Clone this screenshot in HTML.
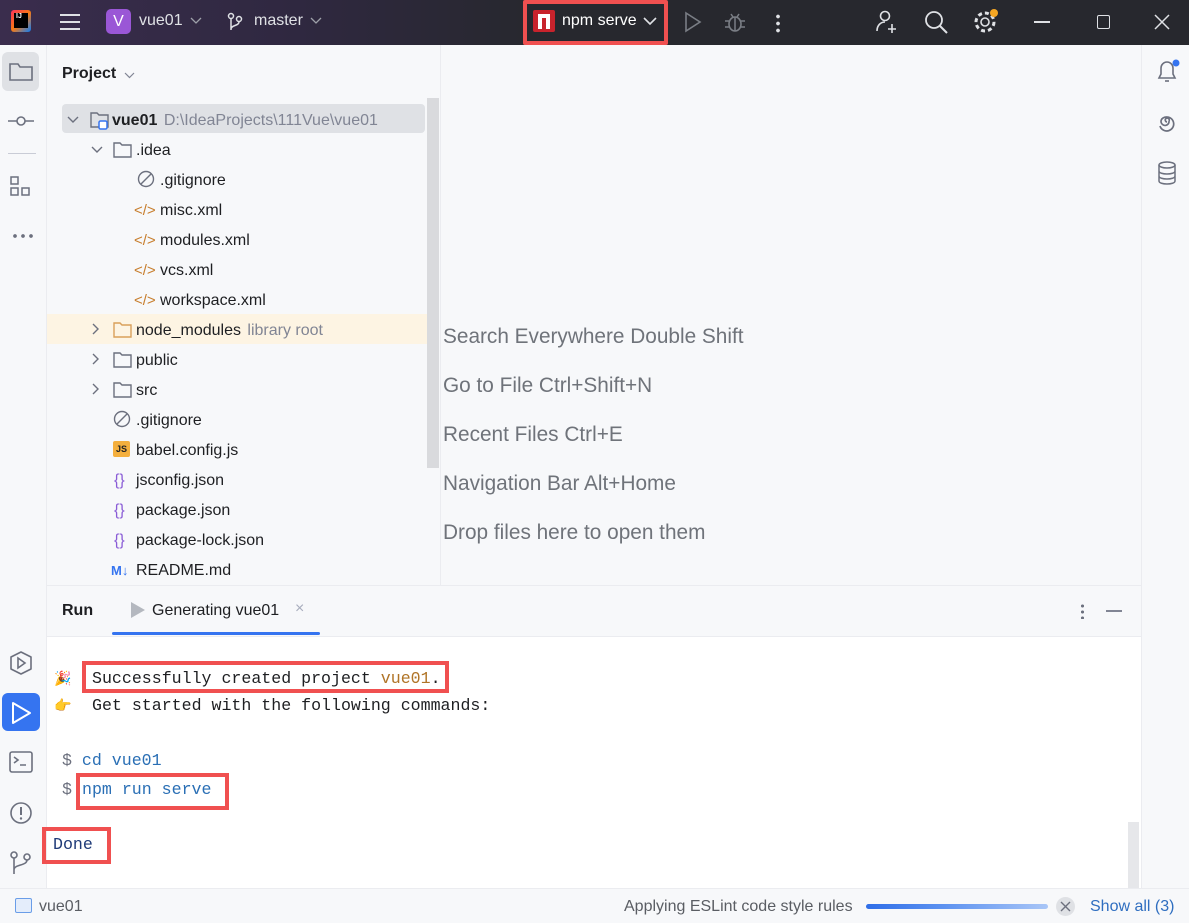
<!DOCTYPE html>
<html><head><meta charset="utf-8"><style>
*{box-sizing:border-box;margin:0;padding:0}
body{width:1189px;height:923px;overflow:hidden;background:#f7f8fa;font-family:"Liberation Sans","Noto Sans CJK SC",sans-serif;font-size:16px;color:#1e1f22;position:relative}
.abs{position:absolute}
.top{left:0;top:0;width:1189px;height:45px;background:linear-gradient(90deg,#3a2d4d 0%,#2f2840 25%,#27282e 45%,#27282e 100%);color:#dfe1e5}
.row{position:absolute;height:30px;line-height:34px;white-space:nowrap}
.mono{font-family:"Liberation Mono",monospace;font-size:16.6px}
svg{position:absolute}
.x{color:#c77d2c;font-size:15px}
</style></head><body>
<div class="abs top">
  <div class="abs" style="left:11px;top:10px;width:20px;height:22px;background:linear-gradient(135deg,#fe315d,#f97a12 50%,#087cfa);border-radius:3px"></div>
  <div class="abs" style="left:14px;top:13px;width:14px;height:15px;background:#000;color:#fff;font-size:7px;font-weight:bold;padding-left:2px">IJ</div>
  <svg style="left:59px;top:12px" width="22" height="20"><path d="M1 3h20M1 10h20M1 17h20" stroke="#dfe1e5" stroke-width="2"/></svg>
  <div class="abs" style="left:106px;top:9px;width:25px;height:25px;background:#9a57d6;border-radius:5px;color:#fff;text-align:center;line-height:25px;font-size:16px">V</div>
  <div class="abs" style="left:139px;top:12px">vue01</div>
  <svg style="left:190px;top:17px" width="12" height="8"><path d="M1 1l5 5 5-5" fill="none" stroke="#9da0a8" stroke-width="1.3"/></svg>
  <svg style="left:226px;top:12px" width="18" height="20"><circle cx="5" cy="4" r="2.5" fill="none" stroke="#dfe1e5" stroke-width="1.5"/><circle cx="13" cy="7" r="2.5" fill="none" stroke="#dfe1e5" stroke-width="1.5"/><path d="M5 7v11M13 10c0 4-8 3-8 7" fill="none" stroke="#dfe1e5" stroke-width="1.5"/></svg>
  <div class="abs" style="left:254px;top:12px">master</div>
  <svg style="left:310px;top:17px" width="12" height="8"><path d="M1 1l5 5 5-5" fill="none" stroke="#9da0a8" stroke-width="1.3"/></svg>
  <div class="abs" style="left:523px;top:0;width:145px;height:45px;border:4px solid #f05050;border-radius:2px"></div>
  <div class="abs" style="left:533px;top:10px;width:22px;height:22px;background:#c8232c;border-radius:2px"><div class="abs" style="left:5px;top:4px;width:12px;height:15px;border:4px solid #fff;border-bottom:none"></div></div>
  <div class="abs" style="left:562px;top:12px;color:#fff">npm serve</div>
  <svg style="left:643px;top:16px" width="14" height="10"><path d="M1 2l6 6 6-6" fill="none" stroke="#dfe1e5" stroke-width="1.6"/></svg>
  <svg style="left:684px;top:11px" width="18" height="22"><path d="M2 2l14 9-14 9z" fill="none" stroke="#7a7e85" stroke-width="1.6"/></svg>
  <svg style="left:723px;top:10px" width="24" height="24"><ellipse cx="12" cy="14" rx="6" ry="7" fill="none" stroke="#7a7e85" stroke-width="1.6"/><path d="M2 11h4M18 11h4M2 17h4M18 17h4M12 7v14M8 4l2 3M16 4l-2 3" stroke="#7a7e85" stroke-width="1.5"/></svg>
  <div class="abs" style="left:776px;top:13px;width:4px;height:20px;background:radial-gradient(circle,#dfe1e5 1.7px,transparent 2px) 0 0/4px 7px"></div>
  <svg style="left:874px;top:9px" width="26" height="26"><circle cx="11" cy="7" r="4.5" fill="none" stroke="#dfe1e5" stroke-width="1.6"/><path d="M3 22c0-6 4-9 8-9M18 15v9M14 20h8" fill="none" stroke="#dfe1e5" stroke-width="1.6"/></svg>
  <svg style="left:924px;top:10px" width="26" height="26"><circle cx="10" cy="10" r="8" fill="none" stroke="#dfe1e5" stroke-width="1.8"/><path d="M16 16l7 7" stroke="#dfe1e5" stroke-width="2"/></svg>
  <svg style="left:973px;top:9px" width="28" height="28"><circle cx="12" cy="13" r="4" fill="none" stroke="#dfe1e5" stroke-width="1.6"/><circle cx="12" cy="13" r="9" fill="none" stroke="#dfe1e5" stroke-width="3" stroke-dasharray="4 3"/><circle cx="21" cy="4" r="4" fill="#f5a623"/></svg>
  <div class="abs" style="left:1034px;top:21px;width:16px;height:1.5px;background:#dfe1e5"></div>
  <div class="abs" style="left:1097px;top:15px;width:13px;height:14px;border:1.5px solid #dfe1e5;border-radius:2px"></div>
  <svg style="left:1154px;top:14px" width="16" height="16"><path d="M1 1l14 14M15 1L1 15" stroke="#dfe1e5" stroke-width="1.5"/></svg>
</div>

<!-- left strip -->
<div class="abs" style="left:2px;top:52px;width:37px;height:39px;background:#dfe1e5;border-radius:6px"></div>
<svg style="left:9px;top:61px" width="24" height="20"><path d="M1 3h8l2 3h12v13H1z" fill="none" stroke="#6c707e" stroke-width="1.6"/></svg>
<svg style="left:8px;top:114px" width="26" height="14"><circle cx="13" cy="7" r="4" fill="none" stroke="#6c707e" stroke-width="1.6"/><path d="M0 7h9M17 7h9" stroke="#6c707e" stroke-width="1.6"/></svg>
<div class="abs" style="left:8px;top:153px;width:28px;height:1px;background:#c9ccd6"></div>
<svg style="left:10px;top:176px" width="22" height="22"><rect x="1" y="1" width="7" height="7" fill="none" stroke="#6c707e" stroke-width="1.5"/><rect x="1" y="12" width="7" height="7" fill="none" stroke="#6c707e" stroke-width="1.5"/><rect x="12" y="12" width="7" height="7" fill="none" stroke="#6c707e" stroke-width="1.5"/></svg>
<div class="abs" style="left:11px;top:234px;width:22px;height:4px;background:radial-gradient(circle,#6c707e 1.7px,transparent 2px) 0 0/8px 4px"></div>
<svg style="left:8px;top:650px" width="26" height="26"><path d="M13 2l10 5v12l-10 5-10-5V7z" fill="none" stroke="#6c707e" stroke-width="1.6" stroke-linejoin="round"/><path d="M10 8l7 5-7 5z" fill="none" stroke="#6c707e" stroke-width="1.6"/></svg>
<div class="abs" style="left:2px;top:693px;width:38px;height:38px;background:#3574f0;border-radius:6px"></div>
<svg style="left:11px;top:701px" width="22" height="24"><path d="M2 2l17 10-17 10z" fill="none" stroke="#fff" stroke-width="2" stroke-linejoin="round"/></svg>
<svg style="left:9px;top:751px" width="24" height="22"><rect x="1" y="1" width="22" height="20" rx="2" fill="none" stroke="#6c707e" stroke-width="1.6"/><path d="M5 6l4 3-4 3M11 14h6" fill="none" stroke="#6c707e" stroke-width="1.6"/></svg>
<svg style="left:9px;top:801px" width="24" height="24"><circle cx="12" cy="12" r="10" fill="none" stroke="#6c707e" stroke-width="1.6"/><path d="M12 6v8" stroke="#6c707e" stroke-width="2"/><circle cx="12" cy="17.5" r="1.2" fill="#6c707e"/></svg>
<svg style="left:9px;top:850px" width="24" height="26"><circle cx="5" cy="5" r="3" fill="none" stroke="#6c707e" stroke-width="1.6"/><circle cx="18" cy="7" r="3" fill="none" stroke="#6c707e" stroke-width="1.6"/><path d="M5 8v16M18 10c0 6-13 4-13 10" fill="none" stroke="#6c707e" stroke-width="1.6"/></svg>

<!-- right strip -->
<div class="abs" style="left:1141px;top:45px;width:1px;height:843px;background:#ebecf0"></div>
<svg style="left:1155px;top:58px" width="26" height="28"><path d="M4 20h16l-2-4V10a6 6 0 0 0-12 0v6z" fill="none" stroke="#6c707e" stroke-width="1.6"/><path d="M10 23h4" stroke="#6c707e" stroke-width="1.6"/><circle cx="21" cy="5" r="3.5" fill="#3574f0"/></svg>
<svg style="left:1156px;top:111px" width="22" height="22"><path d="M11 11a2 2 0 1 1 2-1M13 10a4 4 0 1 1-6-3M7 7a7 7 0 1 1-3 8" fill="none" stroke="#6c707e" stroke-width="1.7"/></svg>
<svg style="left:1157px;top:161px" width="20" height="24"><ellipse cx="10" cy="4" rx="8" ry="3" fill="none" stroke="#6c707e" stroke-width="1.5"/><path d="M2 4v16c0 4 16 4 16 0V4M2 10c0 4 16 4 16 0M2 15c0 4 16 4 16 0" fill="none" stroke="#6c707e" stroke-width="1.5"/></svg>

<!-- project panel -->
<div class="abs" style="left:46px;top:45px;width:1px;height:843px;background:#ebecf0"></div>
<div class="abs" style="left:440px;top:45px;width:1px;height:540px;background:#ebecf0"></div>
<div class="abs" style="left:62px;top:65px;font-weight:bold">Project</div>
<svg style="left:124px;top:72px" width="11" height="7"><path d="M1 1l4.5 4.5L10 1" fill="none" stroke="#818594" stroke-width="1.2"/></svg>
<div class="abs" style="left:62px;top:104px;width:363px;height:29px;background:#dfe1e5;border-radius:4px"></div>
<div class="abs" style="left:47px;top:314px;width:380px;height:30px;background:#fdf4e3"></div>
<div class="abs" style="left:427px;top:98px;width:12px;height:370px;background:#d9dadd"></div>

<svg style="left:67px;top:116px" width="12" height="8"><path d="M1 1l5 5 5-5" fill="none" stroke="#6c707e" stroke-width="1.4"/></svg>
<svg style="left:90px;top:111px" width="22" height="20"><path d="M1 2h6l2 2h9v12H1z" fill="none" stroke="#6c707e" stroke-width="1.4"/><rect x="9" y="10" width="8" height="8" rx="1.5" fill="#fff" stroke="#3574f0" stroke-width="1.5"/></svg>
<div class="row" style="left:112px;top:104px"><b>vue01</b> <span style="color:#818594;margin-left:2px">D:\IdeaProjects\111Vue\vue01</span></div>

<svg style="left:91px;top:146px" width="12" height="8"><path d="M1 1l5 5 5-5" fill="none" stroke="#6c707e" stroke-width="1.4"/></svg>
<svg style="left:113px;top:142px" width="19" height="16"><path d="M1 1h6l2 2h9v12H1z" fill="none" stroke="#6c707e" stroke-width="1.4"/></svg>
<div class="row" style="left:136px;top:134px">.idea</div>

<svg style="left:137px;top:170px" width="18" height="18"><circle cx="9" cy="9" r="7.5" fill="none" stroke="#6c707e" stroke-width="1.4"/><path d="M4 14L14 4" stroke="#6c707e" stroke-width="1.4"/></svg>
<div class="row" style="left:160px;top:164px">.gitignore</div>
<div class="row x" style="left:134px;top:194px">&lt;/&gt;</div><div class="row" style="left:160px;top:194px">misc.xml</div>
<div class="row x" style="left:134px;top:224px">&lt;/&gt;</div><div class="row" style="left:160px;top:224px">modules.xml</div>
<div class="row x" style="left:134px;top:254px">&lt;/&gt;</div><div class="row" style="left:160px;top:254px">vcs.xml</div>
<div class="row x" style="left:134px;top:284px">&lt;/&gt;</div><div class="row" style="left:160px;top:284px">workspace.xml</div>

<svg style="left:92px;top:323px" width="8" height="12"><path d="M1 1l5 5-5 5" fill="none" stroke="#6c707e" stroke-width="1.4"/></svg>
<svg style="left:113px;top:322px" width="19" height="16"><path d="M1 1h6l2 2h9v12H1z" fill="none" stroke="#d9a05b" stroke-width="1.4"/></svg>
<div class="row" style="left:136px;top:314px">node_modules <span style="color:#818594;margin-left:2px">library root</span></div>
<svg style="left:92px;top:353px" width="8" height="12"><path d="M1 1l5 5-5 5" fill="none" stroke="#6c707e" stroke-width="1.4"/></svg>
<svg style="left:113px;top:352px" width="19" height="16"><path d="M1 1h6l2 2h9v12H1z" fill="none" stroke="#6c707e" stroke-width="1.4"/></svg>
<div class="row" style="left:136px;top:344px">public</div>
<svg style="left:92px;top:383px" width="8" height="12"><path d="M1 1l5 5-5 5" fill="none" stroke="#6c707e" stroke-width="1.4"/></svg>
<svg style="left:113px;top:382px" width="19" height="16"><path d="M1 1h6l2 2h9v12H1z" fill="none" stroke="#6c707e" stroke-width="1.4"/></svg>
<div class="row" style="left:136px;top:374px">src</div>
<svg style="left:113px;top:410px" width="18" height="18"><circle cx="9" cy="9" r="7.5" fill="none" stroke="#6c707e" stroke-width="1.4"/><path d="M4 14L14 4" stroke="#6c707e" stroke-width="1.4"/></svg>
<div class="row" style="left:136px;top:404px">.gitignore</div>
<div class="abs" style="left:113px;top:441px;width:17px;height:16px;background:#f4af3d;border-radius:2px;font-size:9px;font-weight:bold;color:#222;text-align:center;line-height:17px">JS</div>
<div class="row" style="left:136px;top:434px">babel.config.js</div>
<div class="row" style="left:114px;top:464px;color:#8a5cd6">{}</div><div class="row" style="left:136px;top:464px">jsconfig.json</div>
<div class="row" style="left:114px;top:494px;color:#8a5cd6">{}</div><div class="row" style="left:136px;top:494px">package.json</div>
<div class="row" style="left:114px;top:524px;color:#8a5cd6">{}</div><div class="row" style="left:136px;top:524px">package-lock.json</div>
<div class="row" style="left:111px;top:554px;color:#3574f0;font-weight:bold;font-size:13px">M&#8595;</div><div class="row" style="left:136px;top:554px">README.md</div>

<!-- editor hints -->
<div class="abs" style="left:443px;top:325px;font-size:20.8px;color:#6f737a;line-height:24px">
<div style="height:49px">Search Everywhere Double Shift</div>
<div style="height:49px">Go to File Ctrl+Shift+N</div>
<div style="height:49px">Recent Files Ctrl+E</div>
<div style="height:49px">Navigation Bar Alt+Home</div>
<div>Drop files here to open them</div>
</div>

<!-- run panel -->
<div class="abs" style="left:47px;top:585px;width:1094px;height:1px;background:#ebecf0"></div>
<div class="abs" style="left:62px;top:602px;font-weight:bold">Run</div>
<svg style="left:129px;top:601px" width="18" height="18"><path d="M2 1l14 8-14 8z" fill="#b4b8bf"/></svg>
<div class="abs" style="left:152px;top:602px">Generating vue01</div>
<div class="abs" style="left:295px;top:600px;color:#a8adbd;font-size:16px">×</div>
<div class="abs" style="left:112px;top:632px;width:208px;height:3px;background:#3574f0;border-radius:2px"></div>
<div class="abs" style="left:1081px;top:603px;width:3px;height:16px;background:radial-gradient(circle,#6c707e 1.4px,transparent 1.7px) 0 0/3px 6px"></div>
<div class="abs" style="left:1106px;top:610px;width:16px;height:1.5px;background:#818594"></div>
<div class="abs" style="left:47px;top:636px;width:1094px;height:252px;background:#fff;border-top:1px solid #ebecf0"></div>
<div class="abs" style="left:1128px;top:822px;width:11px;height:66px;background:#e6e7ea"></div>

<div class="abs" style="left:54px;top:670px;font-size:14px">🎉</div>
<div class="abs" style="left:54px;top:697px;font-size:14px">👉</div>
<div class="abs" style="left:82px;top:661px;width:367px;height:32px;border:4px solid #f05050"></div>
<div class="abs mono" style="left:92px;top:669px;line-height:20px">Successfully created project <span style="color:#b07427">vue01</span>.</div>
<div class="abs mono" style="left:92px;top:696px;line-height:20px">Get started with the following commands:</div>
<div class="abs mono" style="left:62px;top:751px;line-height:20px;color:#6c707e">$ <span style="color:#2a6fb5">cd vue01</span></div>
<div class="abs mono" style="left:62px;top:780px;line-height:20px;color:#6c707e">$</div>
<div class="abs" style="left:76px;top:773px;width:153px;height:37px;border:4px solid #f05050"></div>
<div class="abs mono" style="left:82px;top:780px;line-height:20px;color:#2a6fb5">npm run serve</div>
<div class="abs" style="left:42px;top:827px;width:69px;height:37px;border:4px solid #f05050"></div>
<div class="abs mono" style="left:53px;top:835px;line-height:20px;color:#1e3a78">Done</div>

<!-- status bar -->
<div class="abs" style="left:0;top:888px;width:1189px;height:35px;background:#f7f8fa;border-top:1px solid #ebecf0"></div>
<div class="abs" style="left:15px;top:898px;width:17px;height:15px;border:1.5px solid #6a9de8;border-radius:2px;background:#e4edfb"></div>
<div class="abs" style="left:39px;top:898px;color:#5a5d63">vue01</div>
<div class="abs" style="left:624px;top:898px;color:#5a5d63">Applying ESLint code style rules</div>
<div class="abs" style="left:866px;top:904px;width:182px;height:5px;border-radius:3px;background:linear-gradient(90deg,#2f6ee8,#5a90f0 40%,#a9c6f7)"></div>
<div class="abs" style="left:1056px;top:897px;width:19px;height:19px;border-radius:50%;background:#dfe1e5"></div>
<svg style="left:1060px;top:901px" width="11" height="11"><path d="M1 1l9 9M10 1L1 10" stroke="#6c707e" stroke-width="1.4"/></svg>
<div class="abs" style="left:1090px;top:898px;color:#2f6ec0">Show all (3)</div>
</body></html>
